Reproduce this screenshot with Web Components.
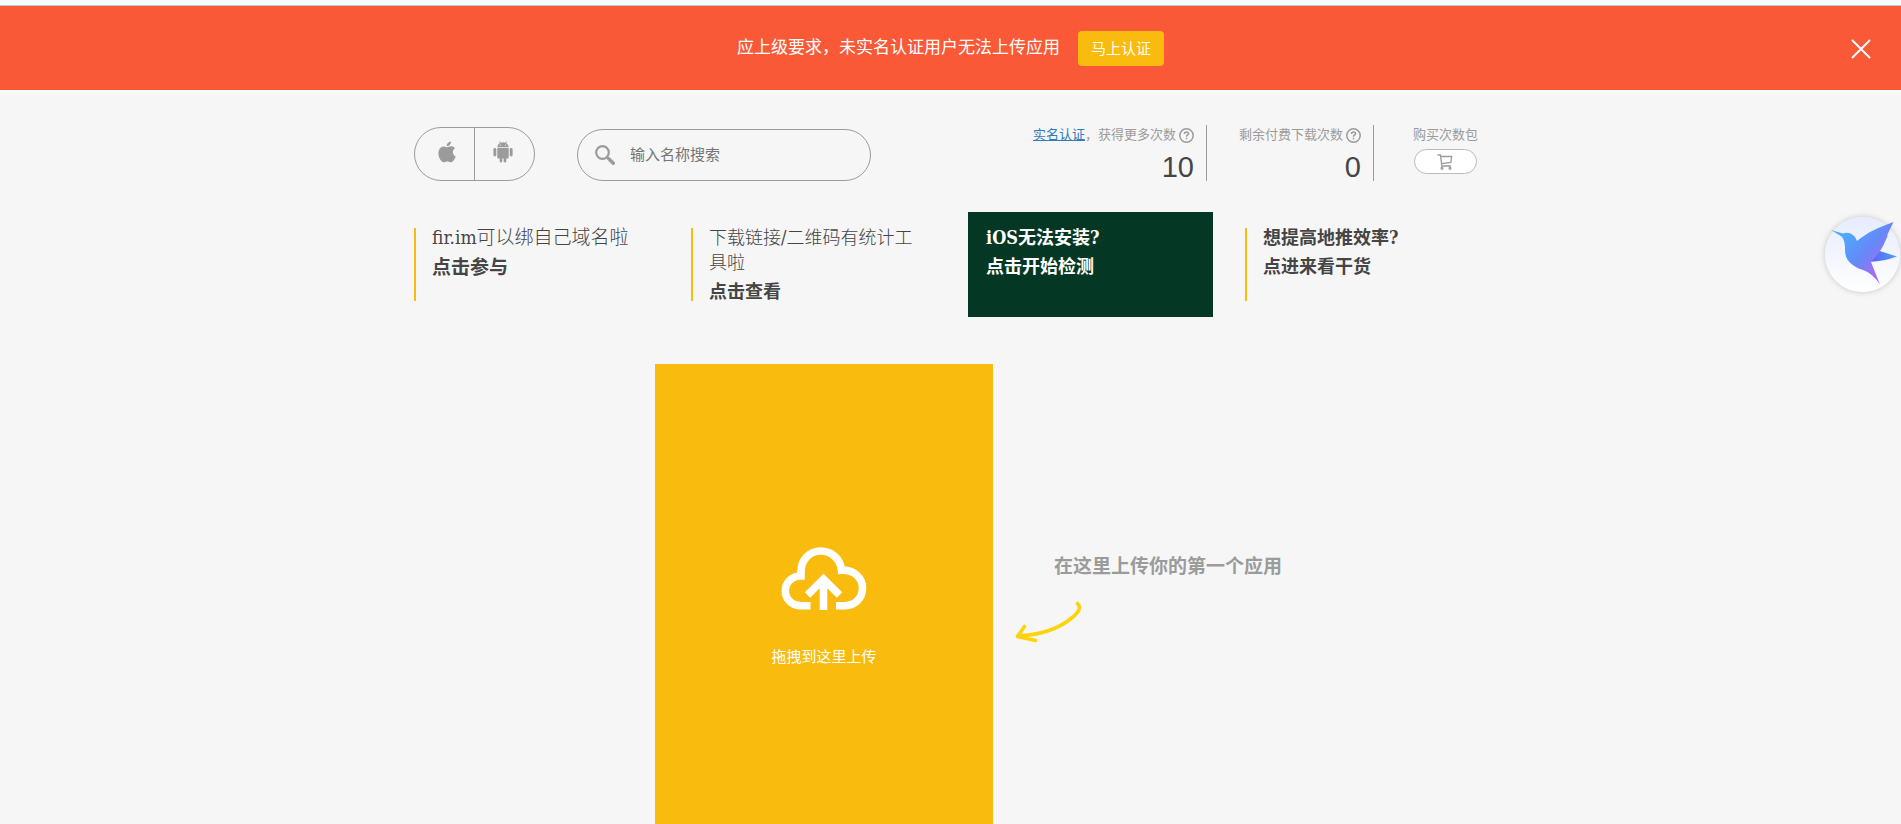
<!DOCTYPE html>
<html lang="zh-CN">
<head>
<meta charset="utf-8">
<title>fir.im</title>
<style>
  body { margin: 0; background: #f6f6f6; color: #454545; font: 13px/20px "Liberation Sans", "Noto Sans CJK SC", sans-serif; }
</style>
</head>
<body>
<fir-app></fir-app>
<script>
const define = (name, html) => {
  const template = document.createElement('template');
  template.innerHTML = '<style>*{box-sizing:border-box}button,input{font:inherit;color:inherit}:host([hidden]){display:none}</style>' + html;
  customElements.define(name, class extends HTMLElement {
    constructor() {
      super();
      this.attachShadow({ mode: 'open' }).append(template.content.cloneNode(true));
    }
  });
};

define('notice-banner', `
<style>
  :host { display: grid; grid-template-columns: 1fr auto 1fr; align-items: center; height: 84px; background: #fa5937; color: #fff; }
  .msg { grid-column: 2; display: flex; align-items: center; gap: 18px; font-size: 17px; line-height: 24px; }
  .go { height: 35px; padding: 1px 13px 0; border: 0; border-radius: 4px; background: #f9bb0d; font-size: 15px; }
  .close { justify-self: end; margin-right: 30px; padding: 2px 0 0; border: 0; background: none; line-height: 0; }
</style>
<div class="msg"><span><slot></slot></span><button class="go" type="button">马上认证</button></div>
<button class="close" type="button" aria-label="关闭"><svg width="20" height="20" viewBox="0 0 20 20" fill="none" stroke="#fff" stroke-width="2"><path d="M1 1l18 18M19 1L1 19"/></svg></button>
`);

define('platform-filter', `
<style>
  :host { display: flex; box-sizing: border-box; width: 121px; height: 54px; border: 1px solid #9b9b9b; border-radius: 27px; overflow: hidden; }
  button { flex: 1; display: grid; place-items: center; padding: 0 4px 4px 0; border: 0; background: none; color: #9b9b9b; }
  .ios { padding: 0 0 4px 4px; border-right: 1px solid #9b9b9b; }
</style>
<button class="ios" type="button" aria-label="iOS"><svg width="18" height="22" viewBox="0 0 18 22" fill="currentColor"><path d="M13 .5c.2 2.600-2 4.800-4.300 4.700C8.500 2.900 10.700.8 13 .5zM9.200 6.300c.9 0 2.100-1 4-1 1.500 0 3 .8 3.900 2-3.300 2-2.800 6.700.6 8.100-.9 2.600-2.900 5.900-4.900 5.900-1.300 0-1.900-.8-3.500-.8s-2.200.8-3.500.8C3.300 21.300.4 16.700.4 12.300c0-4.400 2.700-6.900 5.300-6.900 1.600 0 2.700.9 3.500.9z"/></svg></button>
<button type="button" aria-label="Android"><svg width="20" height="22" viewBox="0 0 20 22" fill="currentColor"><path fill-rule="evenodd" d="M4.300 6.300C4.400 4.300 5.500 2.800 7 2L6 .4l.5-.3L7.600 1.700a7 7 0 0 1 4.800 0L13.500.1l.5.3L13 2c1.500.8 2.600 2.300 2.700 4.300zM7.400 3.500a.6.6 0 1 0 0 1.200.6.6 0 0 0 0-1.200zm5.200 0a.6.6 0 1 0 0 1.200.6.6 0 0 0 0-1.200z"/><path d="M4.300 7h11.400v9.200a1.200 1.200 0 0 1-1.200 1.200h-1.200v2.900a1.200 1.200 0 0 1-2.600 0v-2.900H9.300v2.900a1.200 1.200 0 0 1-2.600 0v-2.900H5.500a1.200 1.200 0 0 1-1.200-1.200z"/><rect x=".4" y="7" width="2.900" height="8.400" rx="1.400"/><rect x="16.700" y="7" width="2.900" height="8.400" rx="1.400"/></svg></button>
`);

define('app-search', `
<style>
  :host { display: block; width: 294px; }
  label { display: flex; align-items: center; gap: 15px; height: 52px; padding: 0 17px; border: 1px solid #9b9b9b; border-radius: 26px; }
  svg { flex: none; }
  input { flex: 1; min-width: 0; padding: 0; border: 0; outline: 0; background: none; font-size: 15px; line-height: 20px; }
  input::placeholder { color: #757575; opacity: 1; }
</style>
<label><svg width="20" height="20" viewBox="0 0 20 20" fill="none" stroke="#9b9b9b"><circle cx="7.500" cy="7.500" r="6.300" stroke-width="2.200"/><path d="M12.300 12.300l1.500 1.500" stroke-width="2"/><path d="M13.700 13.700l4.600 4.600" stroke-width="3.400" stroke-linecap="round"/></svg><input type="text" placeholder="输入名称搜索" aria-label="输入名称搜索"></label>
`);

define('quota-stat', `
<style>
  :host { display: flex; flex-direction: column; align-items: flex-end; height: 56px; padding-right: 12px; border-right: 1px solid #9b9b9b; color: #9b9b9b; }
  .label { display: flex; align-items: center; gap: 3px; }
  .num { margin-top: 6px; color: #454545; font-size: 29px; line-height: 32px; }
  ::slotted(a) { color: #337ab7; text-decoration: underline; }
</style>
<div class="label"><span><slot></slot></span><svg width="15" height="15" viewBox="0 0 15 15" fill="none" stroke="#9b9b9b" stroke-width="1.500"><circle cx="7.500" cy="7.500" r="6.700"/><path d="M5.500 6c0-2.600 4-2.500 4-.3 0 1.300-2 1.300-2 3M7.500 9.800v1.500"/></svg></div>
<div class="num"><slot name="value"></slot></div>
`);

define('buy-pack', `
<style>
  :host { display: block; color: #9b9b9b; text-align: center; }
  button { display: grid; place-items: center; width: 63px; height: 25px; margin: 4px auto 0; padding: 0; border: 1px solid #bbb; border-radius: 13px; background: #fff; }
</style>
<slot></slot>
<button type="button" aria-label="购买次数包"><svg width="16" height="16" viewBox="0 0 16 16" fill="none" stroke="#9b9b9b" stroke-width="1.300"><path d="M.5 1h3l1.300 11h9.200M3.700 2.500h11L13.800 8.500l-9.300 1.200"/><circle cx="5" cy="14.300" r=".9"/><circle cx="13" cy="14.300" r=".9"/></svg></button>
`);

define('promo-card', `
<style>
  :host { display: block; padding: 16px 0; font-family: "DejaVu Serif Condensed", "DejaVu Serif", "Noto Sans CJK SC", serif; font-size: 18px; line-height: 24px; }
  :host([large]) { font-size: 19px; }
  a { display: flex; flex-direction: column; gap: 5px; height: 73px; padding: 0 12px 0 16px; border-left: 2px solid #f9bb0d; color: inherit; text-decoration: none; }
  .title { margin-top: -3px; font-weight: 300; line-height: 25px; }
  :host([strong]) .title, .action { font-weight: 700; }
  :host([dark]) { background: #053824; color: #fff; }
  :host([dark]) a { border-color: transparent; }
</style>
<a href="#"><div class="title"><slot></slot></div><div class="action"><slot name="action"></slot></div></a>
`);

define('upload-zone', `
<style>
  :host { display: block; width: 338px; background: #f9bb0d; color: #fff; }
  button { display: flex; flex-direction: column; align-items: center; gap: 36px; width: 100%; height: 100%; padding: 183px 0 0; border: 0; background: none; font-size: 15px; line-height: 22px; }
</style>
<button type="button"><svg width="86" height="63" viewBox="0 0 86 63" fill="none" stroke="#fff" stroke-width="7.600"><path d="M29.500 58.700H20C10.500 58.700 4.300 51.800 4.300 44c0-8.500 6.700-15 15.700-15V24.500C20 12.500 29 4 39.500 4 50.500 4 59.500 12 60.500 23.200 73.500 22.500 81.500 31.500 81.500 41c0 10.500-8 17.700-17.500 17.700h-9"/><path d="M42.500 63V32M26.500 48l16-16 16 16"/></svg><slot></slot></button>
`);

define('upload-hint', `
<style>
  :host { display: block; padding: 189px 0 0 22px; color: #9b9b9b; }
  p { margin: 0 0 20px 39px; font-size: 19px; line-height: 28px; font-weight: 700; }
  svg { display: block; }
</style>
<p><slot></slot></p>
<svg width="68" height="42" viewBox="0 0 68 42" fill="none" stroke="#fed30b" stroke-width="3.600" stroke-linecap="round" stroke-linejoin="round"><path d="M62.500 2.500C67 7 63 12 56 17.500 42 29 24 34 2.500 35M9.500 25.500L2.500 35.500l18 4"/></svg>
`);

define('bird-widget', `
<style>
  :host { position: fixed; top: 217px; right: 1px; width: 75px; height: 75px; }
  button { width: 100%; height: 100%; padding: 0; border: 0; border-radius: 50%; background: linear-gradient(#e6ecfd, #fff); box-shadow: 0 0 6px rgba(0,0,0,.2); }
  svg { display: block; overflow: visible; }
</style>
<button type="button" aria-label="上传助手"><svg width="75" height="75" viewBox="0 0 75 75"><defs><linearGradient id="b" gradientUnits="userSpaceOnUse" x1="18" y1="18" x2="60" y2="56"><stop offset="0" stop-color="#4cabff"/><stop offset=".5" stop-color="#6688f8"/><stop offset="1" stop-color="#b964f5"/></linearGradient><linearGradient id="w" x1="0" x2="1"><stop offset="0" stop-color="#5a5cf0"/><stop offset="1" stop-color="#4fa2ff"/></linearGradient></defs><path fill="url(#w)" d="M50 32.500L72 39.500Q60 44 44 45z"/><path fill="url(#b)" d="M6 13L18 16.500C23 14 30 17 32 24c10-8.500 22-14 36.500-19L62 18.500l1-.5-4 9C57 32 51 40 46 45L55 67.500C50 60 44 55 38 53 28 50 19.500 43 20 33c.2-6-1-11-3.500-13.500z"/></svg></button>
`);

define('fir-app', `
<style>
  :host { display: flex; flex-direction: column; min-height: 100vh; }
  .strip { height: 6px; background: #f6faff; border-bottom: 1px solid #b5cbdd; }
  .rule { height: 2px; background: #fff; }
  main { flex: 1; display: flex; flex-direction: column; width: 100%; max-width: 1073px; margin: 0 auto; }
  .tools { display: flex; align-items: flex-end; padding-top: 33px; }
  app-search { margin-left: 42px; }
  .stats { display: flex; flex: 1; justify-content: flex-end; padding-right: 9px; }
  quota-stat + quota-stat { margin-left: 32px; }
  buy-pack { margin-left: 39px; }
  .promos { display: grid; grid-template-columns: repeat(4, 245px); gap: 32px; margin-top: 31px; }
  .upload { flex: 1; display: flex; margin-top: 47px; padding-left: 241px; }
</style>
<div class="strip"></div>
<notice-banner>应上级要求，未实名认证用户无法上传应用</notice-banner>
<div class="rule"></div>
<main>
  <div class="tools">
    <platform-filter></platform-filter>
    <app-search></app-search>
    <div class="stats">
      <quota-stat><a href="#">实名认证</a>，获得更多次数<span slot="value">10</span></quota-stat>
      <quota-stat>剩余付费下载次数<span slot="value">0</span></quota-stat>
      <buy-pack>购买次数包</buy-pack>
    </div>
  </div>
  <div class="promos">
    <promo-card large>fir.im可以绑自己域名啦<span slot="action">点击参与</span></promo-card>
    <promo-card>下载链接/二维码有统计工具啦<span slot="action">点击查看</span></promo-card>
    <promo-card dark strong>iOS无法安装?<span slot="action">点击开始检测</span></promo-card>
    <promo-card strong>想提高地推效率?<span slot="action">点进来看干货</span></promo-card>
  </div>
  <div class="upload">
    <upload-zone>拖拽到这里上传</upload-zone>
    <upload-hint>在这里上传你的第一个应用</upload-hint>
  </div>
</main>
<bird-widget></bird-widget>
`);
</script>
</body>
</html>
